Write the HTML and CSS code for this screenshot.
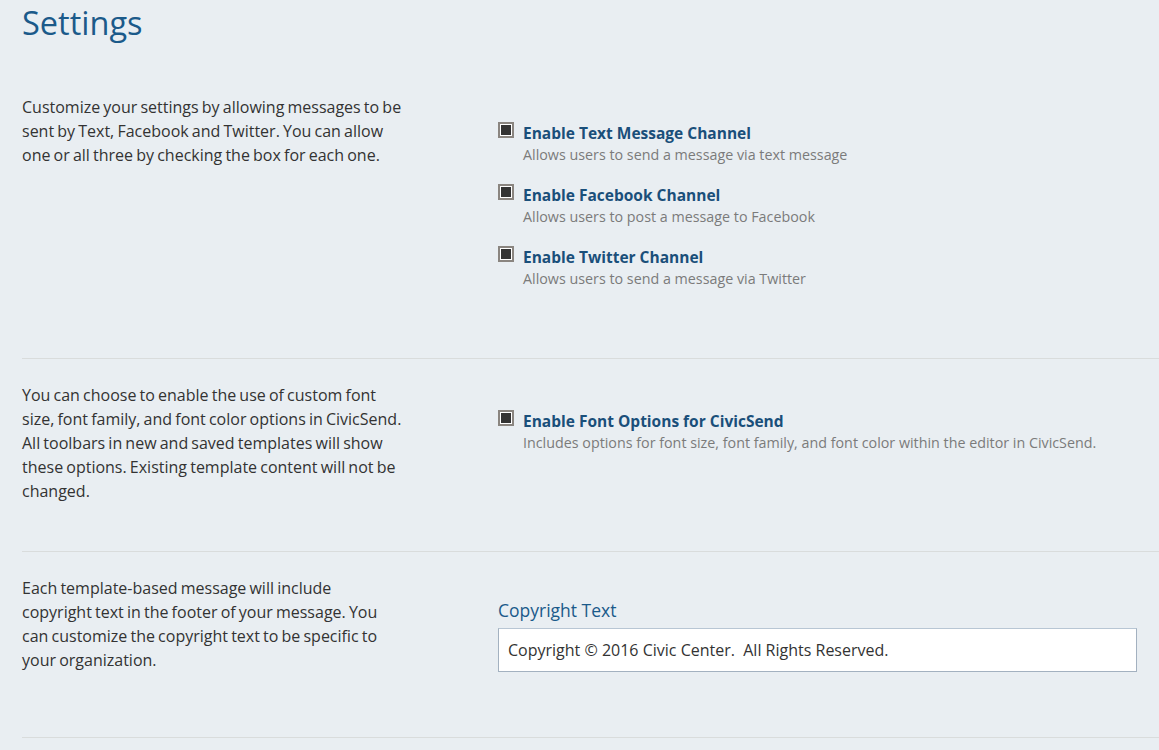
FILE: index.html
```html
<!DOCTYPE html>
<html>
<head>
  <title>Settings</title>
  <link rel="stylesheet" href="styles.css">
</head>
<body>
  <div class="settings-page">
    <h1 class="page-title">Settings</h1>

    <div class="settings-row row-channels">
      <p class="row-help">Customize your settings by allowing messages to be sent by Text, Facebook and Twitter. You can allow one or all three by checking the box for each one.</p>
      <div class="row-options">
        <label class="option">
          <span class="check checked"></span>
          <span class="option-text">
            <span class="option-title">Enable Text Message Channel</span>
            <span class="option-desc">Allows users to send a message via text message</span>
          </span>
        </label>
        <label class="option">
          <span class="check checked"></span>
          <span class="option-text">
            <span class="option-title">Enable Facebook Channel</span>
            <span class="option-desc">Allows users to post a message to Facebook</span>
          </span>
        </label>
        <label class="option">
          <span class="check checked"></span>
          <span class="option-text">
            <span class="option-title">Enable Twitter Channel</span>
            <span class="option-desc">Allows users to send a message via Twitter</span>
          </span>
        </label>
      </div>
    </div>

    <div class="settings-row row-fonts">
      <p class="row-help">You can choose to enable the use of custom font size, font family, and font color options in CivicSend. All toolbars in new and saved templates will show these options. Existing template content will not be changed.</p>
      <div class="row-options">
        <label class="option">
          <span class="check checked"></span>
          <span class="option-text">
            <span class="option-title">Enable Font Options for CivicSend</span>
            <span class="option-desc">Includes options for font size, font family, and font color within the editor in CivicSend.</span>
          </span>
        </label>
      </div>
    </div>

    <div class="settings-row row-copyright">
      <p class="row-help">Each template-based message will include copyright text in the footer of your message. You can customize the copyright text to be specific to your organization.</p>
      <div class="row-field">
        <label class="field-label" for="copyright">Copyright Text</label>
        <input type="text" id="copyright" class="field-input" value="Copyright © 2016 Civic Center.  All Rights Reserved.">
      </div>
    </div>
  </div>
</body>
</html>
```

FILE: styles.css
```css
body {
  margin: 0;
  background: #e9eef2;
  font-family: "Open Sans", Lato, sans-serif;
  color: #333;
}

.settings-page {
  padding-left: 22px;
}

.page-title {
  margin: 0;
  padding-top: 3px;
  height: 68px;
  font-size: 32.5px;
  line-height: 40px;
  font-weight: 400;
  color: #1b5a8a;
}

.settings-row {
  display: grid;
  grid-template-columns: 381px 1fr;
  column-gap: 95px;
  padding: 24px 22px 0 0;
  border-bottom: 1px solid #d9dcdc;
}

.row-channels {
  padding-bottom: 68px;
}

.row-fonts {
  padding-bottom: 48px;
}

.row-copyright {
  padding-bottom: 65px;
}

.row-help {
  margin: 0;
  font-size: 16px;
  line-height: 24px;
  word-spacing: -1px;
  color: #333;
}

.row-options {
  padding-top: 27px;
}

.option {
  display: flex;
  gap: 9px;
  padding-bottom: 18px;
}

.option:last-child {
  padding-bottom: 0;
}

.check {
  flex: none;
  width: 12px;
  height: 12px;
  border: 2px solid #8a8580;
  background: #fff;
  position: relative;
}

.check.checked::after {
  content: "";
  position: absolute;
  left: 1px;
  top: 1px;
  right: 1px;
  bottom: 1px;
  background: #333;
}

.option-text {
  display: flex;
  flex-direction: column;
}

.option-title {
  font-size: 15.5px;
  line-height: 22px;
  font-weight: 700;
  color: #1a4f7a;
}

.option-desc {
  font-size: 14.3px;
  line-height: 22px;
  color: #7b7b7b;
}

.row-field {
  padding-top: 23px;
}

.field-label {
  display: block;
  font-size: 17.5px;
  line-height: 22px;
  color: #1b5a8a;
  margin-bottom: 7px;
}

.field-input {
  display: block;
  box-sizing: border-box;
  width: 100%;
  height: 44px;
  margin: 0;
  padding: 0 9px;
  border: 1px solid #a3b1c0;
  border-top-color: #b8c6d4;
  background: #fff;
  font-family: "Open Sans", sans-serif;
  font-size: 16px;
  color: #333;
}
```
